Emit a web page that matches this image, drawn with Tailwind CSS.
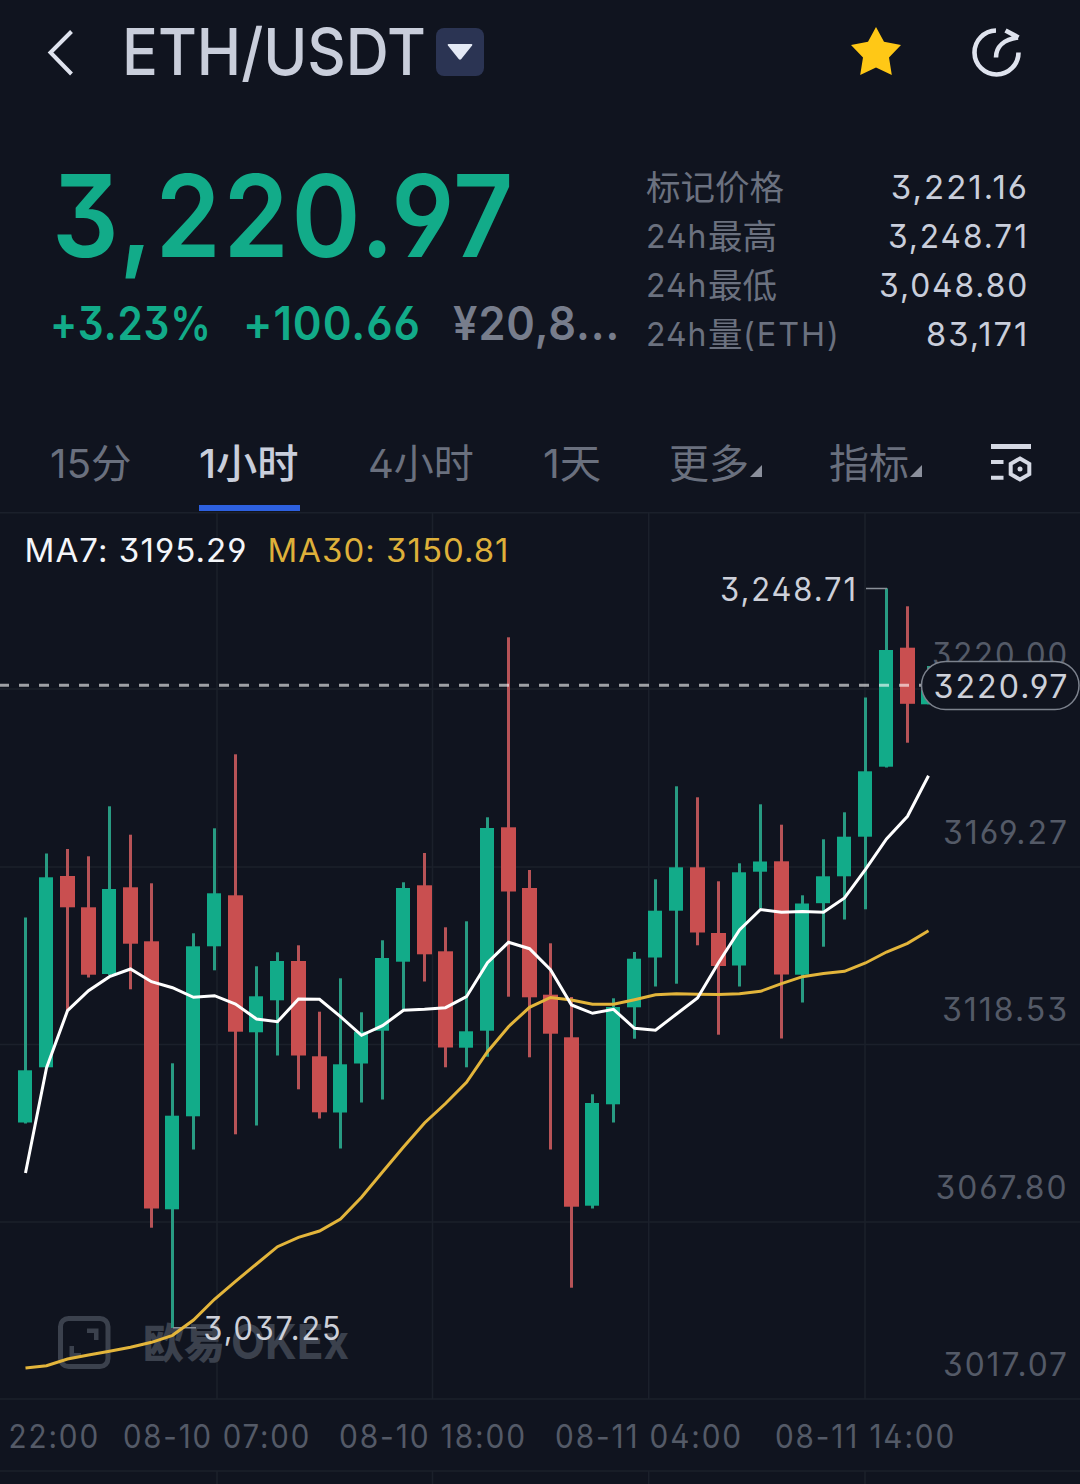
<!DOCTYPE html>
<html lang="zh-CN">
<head>
    <meta charset="UTF-8">
    <meta name="viewport" content="width=device-width, initial-scale=1.0">
    <title>ETH/USDT</title>
    <script src="https://cdn.jsdelivr.net/npm/@tailwindcss/browser@4"></script>
</head>
<body class="w-[1080px] h-[1484px] overflow-hidden bg-[#10141f] text-[#c9cedb] font-['Inter','Noto_Sans_CJK_SC',sans-serif] [font-feature-settings:'cv02','cv03','cv04','cv09','calt'_0] whitespace-nowrap">
    <header class="flex items-center h-[104px] pl-[46px] pr-[56px]">
        <svg class="w-[30px] h-[48px]" viewBox="0 0 30 48" fill="none" stroke="#dfe3ee" stroke-width="4"><path d="M25.5 3.5 4.5 24.5 25.5 46"/></svg>
        <h1 class="ml-[46px] w-[314px] text-[64.5px] leading-[102px] font-medium"><span class="inline-block origin-left" data-fit="304">ETH/USDT</span></h1>
        <button class="flex items-center justify-center w-12 h-12 rounded-lg bg-[#2b3453]">
            <svg class="w-[26px] h-[18px]" viewBox="0 0 26 18" fill="#e4e9f5"><path d="M1.5 1h23q1.5.3.6 1.6L14.3 16q-1.3 1.4-2.6 0L.9 2.6Q0 1.3 1.5 1z"/></svg>
        </button>
        <svg class="ml-auto mb-[2px] w-[50px] h-[50px]" viewBox="0 0 50 50" fill="#ffc816"><path d="M25 1 33 15.8 50 19 38 31.5 40.8 49 25 41.5 9.2 49 12 31.5 0 19 17 15.8z"/></svg>
        <svg class="ml-[69px] w-[54px] h-[54px]" viewBox="0 0 54 54" fill="none" stroke="#dfe3ee" stroke-width="4.6"><path d="M26 5.500A22 22 0 1 0 48.500 27.500"/><path d="M26 32.500C26 21.500 34 14.500 48 12.500M35.500 5.500 48.500 12.500"/></svg>
    </header>

    <section class="flex h-[308px] pl-[50px] pr-[51px]">
        <div class="w-[596px] pt-[47px] text-[#12ab89] font-semibold">
            <div class="pl-[2px] text-[114px] leading-[130px] tracking-[3px]"><span class="inline-block origin-left" data-fit="464">3,220.97</span></div>
            <div class="flex mt-3 text-[46.5px] leading-[60px] tracking-[1px]">
                <div class="w-[193px]"><span class="inline-block origin-left" data-fit="162">+3.23%</span></div>
                <div class="w-[210px]"><span class="inline-block origin-left" data-fit="178">+100.66</span></div>
                <div class="w-[168px] text-[#777d8c]"><span class="inline-block origin-left" data-fit="167">¥20,8...</span></div>
            </div>
        </div>
        <dl class="flex-1 pt-[59px] text-[33px] leading-[49px]">
            <div class="flex justify-between"><dt class="text-[#6b717f] text-[34.500px]">标记价格</dt><dd class="tracking-[2px]"><span class="inline-block origin-right" data-fit="138">3,221.16</span></dd></div>
            <div class="flex justify-between"><dt class="flex text-[#6b717f]"><span class="w-[62px] tracking-[1px]"><span class="inline-block origin-left" data-fit="61">24h</span></span><span class="text-[34.500px]">最高</span></dt><dd class="tracking-[2px]"><span class="inline-block origin-right" data-fit="141">3,248.71</span></dd></div>
            <div class="flex justify-between"><dt class="flex text-[#6b717f]"><span class="w-[62px] tracking-[1px]"><span class="inline-block origin-left" data-fit="61">24h</span></span><span class="text-[34.500px]">最低</span></dt><dd class="tracking-[2px]"><span class="inline-block origin-right" data-fit="150">3,048.80</span></dd></div>
            <div class="flex justify-between"><dt class="flex text-[#6b717f]"><span class="w-[62px] tracking-[1px]"><span class="inline-block origin-left" data-fit="61">24h</span></span><span class="text-[34.500px]">量</span><span class="w-[96px] tracking-[2px]"><span class="inline-block origin-left" data-fit="98">(ETH)</span></span></dt><dd class="tracking-[2px]"><span class="inline-block origin-right" data-fit="103">83,171</span></dd></div>
        </dl>
    </section>

    <nav class="flex h-[100px] pl-[50px] text-[40px] leading-[104px] text-[#6a707e]">
        <div class="w-[149px]"><span class="inline-block origin-left" data-fit="82">15分</span></div>
        <div class="w-[101px] mr-[68px] h-[99px] border-b-6 border-[#2d60df] text-[#c9cedb] font-medium"><span class="inline-block origin-left" data-fit="100">1小时</span></div>
        <div class="w-[175px]"><span class="inline-block origin-left" data-fit="106">4小时</span></div>
        <div class="w-[126px]"><span class="inline-block origin-left" data-fit="58">1天</span></div>
        <div class="flex w-[160px]">更多<svg class="mt-[53px] ml-px w-3 h-3" viewBox="0 0 12 12" fill="#8b909c"><path d="M12 0v12H0z"/></svg></div>
        <div class="flex w-[161px]">指标<svg class="mt-[53px] ml-px w-3 h-3" viewBox="0 0 12 12" fill="#8b909c"><path d="M12 0v12H0z"/></svg></div>
        <svg class="mt-[30px] w-[42px] h-[42px]" viewBox="0 0 42 42" fill="none" stroke="#d5d9e4" stroke-width="4"><path d="M1 4.500H41" stroke-width="5"/><path d="M1 20H13.500M1 35.700H13.500"/><path d="M30 16.500 39.300 21.800V32.200L30 37.500 20.700 32.200V21.800z"/><circle cx="30" cy="27" r="2.500" fill="#d5d9e4" stroke="none"/></svg>
    </nav>

    <svg id="chart" class="block w-[1080px] h-[972px] text-[32px] tracking-[2px]" viewBox="0 512 1080 972">
        <g stroke="#1b202b" stroke-width="1.5">
            <path d="M0 512.700H1080M0 689H1080M0 867H1080M0 1044.500H1080M0 1222H1080M0 1399H1080M0 1471H1080"/>
            <path d="M217 512V1399M432.500 512V1399M648.700 512V1399M865 512V1399M217 1471V1484M432.500 1471V1484M648.700 1471V1484M865 1471V1484"/>
        </g>

        <g fill="#3b414d">
            <rect x="60.500" y="1318.500" width="47.500" height="48" rx="8" fill="none" stroke="#3b414d" stroke-width="5"/>
            <path d="M87 1328.500H98.500V1340H94V1333H87zM69.500 1346H74V1353H81V1357.500H69.500z"/>
            <text x="143" y="1358" font-size="41" font-weight="900" textLength="82" lengthAdjust="spacingAndGlyphs" class="tracking-normal font-['Noto_Sans_CJK_SC']">欧易</text>
            <text x="231" y="1359" font-size="48" font-weight="700" textLength="118" lengthAdjust="spacingAndGlyphs" class="tracking-normal">OKEx</text>
        </g>

        <g fill="#545a67">
            <text x="932" y="665.500" textLength="137" lengthAdjust="spacingAndGlyphs">3220.00</text>
            <text x="943" y="844" textLength="126" lengthAdjust="spacingAndGlyphs">3169.27</text>
            <text x="942" y="1021" textLength="127" lengthAdjust="spacingAndGlyphs">3118.53</text>
            <text x="935.500" y="1199" textLength="133" lengthAdjust="spacingAndGlyphs">3067.80</text>
            <text x="943" y="1376" textLength="126" lengthAdjust="spacingAndGlyphs">3017.07</text>
            <text x="8.500" y="1448" textLength="91.500" lengthAdjust="spacingAndGlyphs">22:00</text>
            <text x="123" y="1448" textLength="188" lengthAdjust="spacingAndGlyphs">08-10 07:00</text>
            <text x="339" y="1448" textLength="188" lengthAdjust="spacingAndGlyphs">08-10 18:00</text>
            <text x="555" y="1448" textLength="188" lengthAdjust="spacingAndGlyphs">08-11 04:00</text>
            <text x="775" y="1448" textLength="181" lengthAdjust="spacingAndGlyphs">08-11 14:00</text>
        </g>

        <g id="candles"></g>
        <path d="M866 588.500H887M173 1327.700H196" stroke="#8a9099" stroke-width="1.500"/>
        <path d="M-1 685.300H921" stroke="#fff" stroke-opacity=".6" stroke-width="3" stroke-dasharray="10 10"/>
        <polyline id="ma30" fill="none" stroke="#e3b53b" stroke-width="3"/>
        <polyline id="ma7" fill="none" stroke="#fff" stroke-width="3"/>

        <g class="tracking-[1px]">
            <text x="24.500" y="562" fill="#f4f6fa" textLength="223" lengthAdjust="spacingAndGlyphs">MA7: 3195.29</text>
            <text x="267.500" y="562" fill="#deb03a" textLength="242" lengthAdjust="spacingAndGlyphs">MA30: 3150.81</text>
        </g>
        <g fill="#cdd0d9">
            <text x="720" y="600.500" textLength="138" lengthAdjust="spacingAndGlyphs">3,248.71</text>
            <text x="203.500" y="1339.500" textLength="139" lengthAdjust="spacingAndGlyphs">3,037.25</text>
            <rect x="921.500" y="661.500" width="157.500" height="48" rx="24" fill="#10141f" stroke="#7c828d" stroke-width="1.500"/>
            <text x="933.500" y="697.500" textLength="136" lengthAdjust="spacingAndGlyphs">3220.97</text>
        </g>
    </svg>

    <script>
        const fitter = new ResizeObserver(entries => entries.forEach(({ target }) => {
            target.style.transform = `scaleX(${target.dataset.fit / target.offsetWidth})`;
        }));
        document.querySelectorAll('[data-fit]').forEach(el => fitter.observe(el));

        // direction, high, body top, body bottom, low
        const candles = [
            ['u', 917.5, 1070.3, 1122.5, 1123.5], ['u', 853.5, 877.3, 1067.3, 1067.3], ['d', 849, 876, 907.3, 1010],
            ['d', 856.3, 907.3, 974.7, 977.5], ['u', 806.3, 889, 974, 975], ['d', 834.7, 887.3, 943.7, 989.3],
            ['d', 883.3, 941.3, 1208.5, 1227.7], ['u', 1063.3, 1115.7, 1209.3, 1328], ['u', 933.3, 946.3, 1116.3, 1149.5],
            ['u', 828.3, 893.3, 946.3, 970.3], ['d', 754.3, 895.3, 1031.7, 1134.3], ['u', 966.3, 996.3, 1032.3, 1125.5],
            ['u', 952.3, 961, 1000.3, 1055.5], ['d', 945.3, 961, 1055.5, 1089.3], ['d', 1011.7, 1056.3, 1112.3, 1118.5],
            ['u', 978.3, 1064.3, 1112.5, 1148.5], ['u', 1012.3, 1031.7, 1063.5, 1102.5], ['u', 940.3, 958, 1030.7, 1099.5],
            ['u', 882.3, 888, 961.7, 1010], ['d', 853, 885.3, 954.3, 981.5], ['d', 927.3, 951.3, 1047.5, 1067.3],
            ['u', 921.3, 1031.3, 1047.7, 1067.3], ['u', 817.3, 828, 1030.7, 1056.7], ['d', 637.3, 827.3, 891.5, 996.7],
            ['d', 870, 888, 997.3, 1057.3], ['d', 943.3, 994.7, 1033.7, 1149.5], ['d', 997, 1037.3, 1206.7, 1287.7],
            ['u', 1094.3, 1103, 1205.7, 1208.5], ['u', 998.3, 1007, 1104.3, 1122.5], ['u', 952, 958.7, 1007.3, 1038.7],
            ['u', 879.3, 910.7, 957.5, 986.5], ['u', 786.3, 867.3, 910.7, 983.7], ['d', 797.3, 867.3, 932.5, 945.3],
            ['d', 881.3, 933, 966, 1034.7], ['u', 863.3, 872.3, 965.5, 986.5], ['u', 804.3, 861.5, 871.7, 908],
            ['d', 824.7, 861.3, 974.5, 1038.5], ['u', 895.3, 903.5, 974.7, 1002.5], ['u', 839.3, 876.3, 903.2, 946.7],
            ['u', 812.3, 836.7, 876.3, 919.5], ['u', 697.5, 771.3, 836.7, 909.3], ['u', 588.3, 650, 766.7, 767.5],
            ['d', 606.3, 647.7, 703.8, 742.7], ['u', 666, 690, 704.3, 704.3]
        ];
        const ma7 = [1173, 1068, 1010.7, 990.7, 976.7, 969, 981.7, 987.7, 997.3, 995.7, 1004, 1019, 1021.7, 999, 999.3,
            1016.7, 1035.3, 1025.7, 1010.3, 1009.3, 1007.7, 996.7, 962.7, 942.3, 948.7, 969.7, 1005, 1013.3, 1009.3,
            1028.3, 1030.3, 1014, 998, 962.7, 930, 909.5, 912.3, 911.5, 912.3, 898, 869.3, 839, 816.3, 775.7];
        const ma30 = [1368, 1365.7, 1359, 1355, 1351.3, 1347.3, 1342.3, 1335.3, 1320, 1299.3, 1281.3, 1264, 1246.7, 1237.3,
            1231, 1219, 1197.3, 1172, 1147, 1123, 1103.5, 1082.3, 1051.7, 1026.7, 1007.3, 997.5, 1000, 1004.3, 1004.3,
            999.7, 994.7, 993.7, 994.3, 994.5, 993.7, 991.3, 983.7, 976.7, 973.5, 971.3, 963, 952, 943.3, 930.7];

        const xAt = i => 25.5 + i * 21;
        document.getElementById('candles').innerHTML = candles.map(([dir, high, top, bottom, low], i) => {
            const up = dir === 'u';
            const x = xAt(i);
            return `<rect x="${x - 1.5}" y="${high}" width="3" height="${low - high}" fill="${up ? '#289b82' : '#b75357'}"/>` +
                `<rect x="${x - 7.5}" y="${top}" width="${up ? 14 : 15}" height="${bottom - top}" fill="${up ? '#12ab89' : '#c94f50'}"/>`;
        }).join('');

        const points = list => list.map((y, i) => `${xAt(i)},${y}`).join(' ');
        document.getElementById('ma7').setAttribute('points', points(ma7));
        document.getElementById('ma30').setAttribute('points', points(ma30));
    </script>
</body>
</html>
